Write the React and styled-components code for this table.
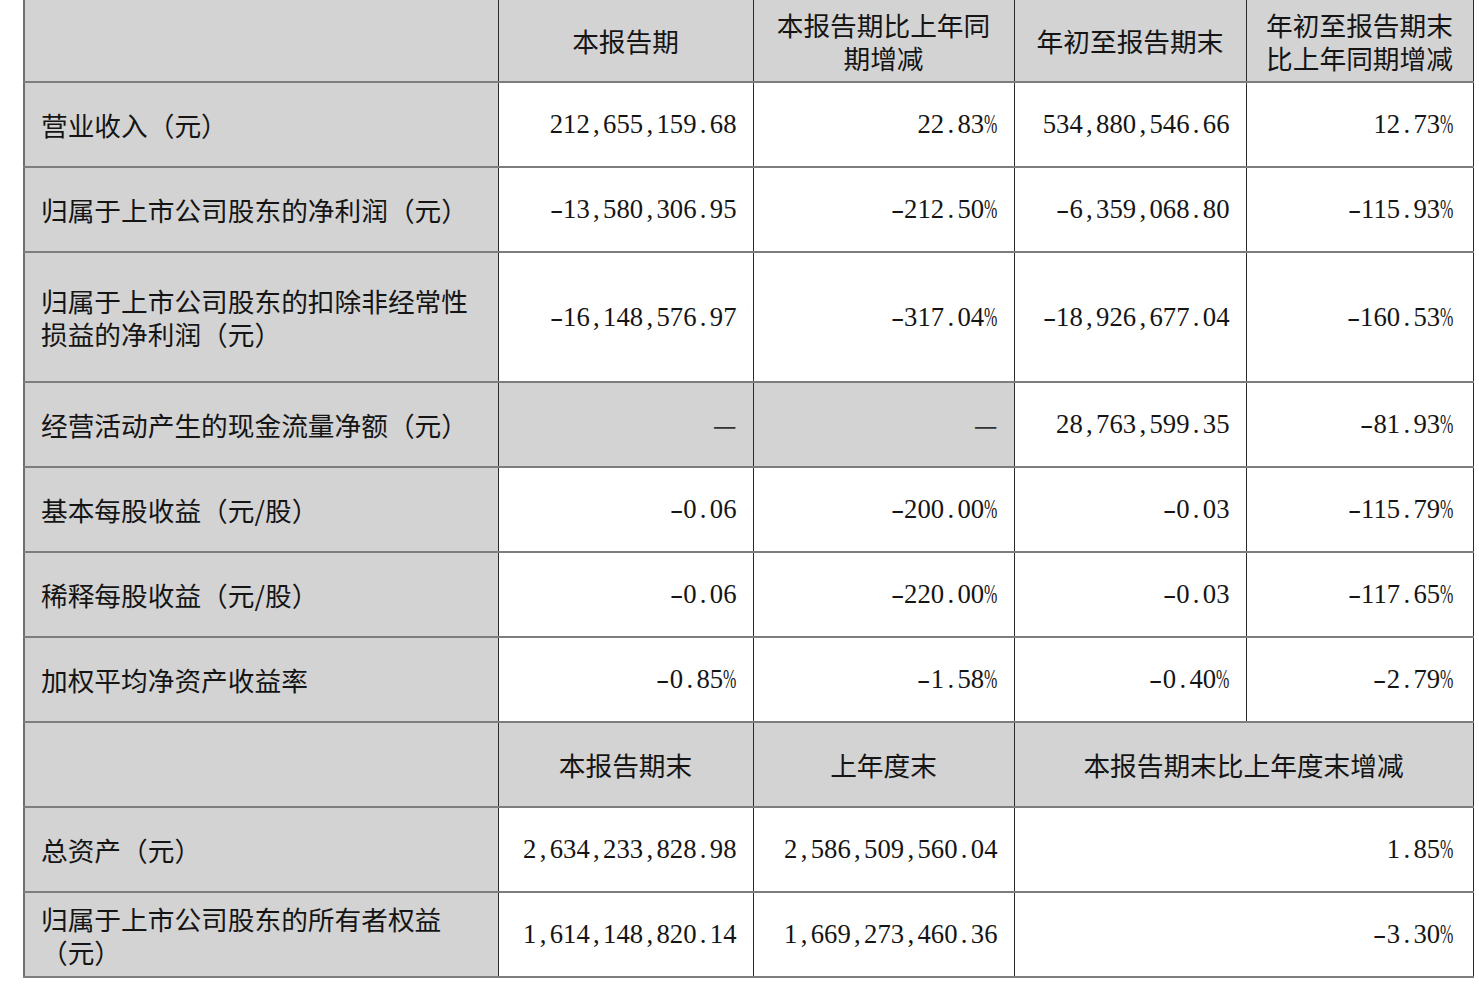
import React from "react";
import styled, { createGlobalStyle } from "styled-components";

const GlobalStyle = createGlobalStyle`
  html, body {
    margin: 0;
    padding: 0;
    background: #ffffff;
  }
`;

const Page = styled.div`
  padding: 0 0 0 23px;
  width: 1479px;
  height: 986px;
  box-sizing: border-box;
  overflow: hidden;
`;

const Table = styled.table`
  border-collapse: collapse;
  table-layout: fixed;
  width: 1449px;
  color: #151515;
  font-family: "Noto Sans CJK SC", "Noto Sans", sans-serif;
  font-size: 26.7px;
  border-left: 2px solid #6e6e6e;
  border-right: 1px solid #444;
  border-bottom: 2px solid #7a7a7a;
`;

const Row = styled.tr`
  height: ${(p) => p.$h || 85}px;
`;

const Cell = styled.td`
  box-sizing: border-box;
  background: ${(p) => (p.$shade ? "#d3d3d3" : "#ffffff")};
  border-top: 2px solid #7d7d7d;
  border-bottom: 2px solid #7d7d7d;
  border-left: 1px solid #2b2b2b;
  border-right: 1px solid #2b2b2b;
  padding: ${(p) => (p.$num ? "0 16px 0 8px" : "0 10px 0 16px")};
  text-align: ${(p) => (p.$head ? "center" : p.$num ? "right" : "left")};
  vertical-align: middle;
  line-height: 33px;
  white-space: nowrap;
  font-family: ${(p) =>
    p.$num
      ? '"Liberation Serif", "DejaVu Serif", serif'
      : '"Noto Sans CJK SC", "Noto Sans", sans-serif'};
  font-size: 26.7px;
  ${(p) => p.$head && "padding: 0 6px;"}
  ${(p) => p.$first && "border-top: none;"}
  ${(p) => p.$last && "padding-right: 19px;"}
`;

/* half-width slot, like the ASCII cells of a Song-style font */
const Slot = styled.span`
  display: inline-block;
  width: 0.5em;
  text-align: center;
`;

const Minus = styled.span`
  display: inline-block;
  width: 0.5em;
  text-align: center;
  transform: scaleX(1.5);
`;

const Pct = styled.span`
  display: inline-block;
  width: 0.5em;
  transform: scaleX(0.6);
  transform-origin: left center;
`;

const Dash = styled.span`
  font-family: "Noto Sans CJK SC", sans-serif;
  color: #333;
`;

function Num({ value }) {
  if (value === "—") return <Dash>—</Dash>;
  return value.split("").map((ch, i) => {
    if (ch === "," || ch === ".") return <Slot key={i}>{ch}</Slot>;
    if (ch === "-") return <Minus key={i}>-</Minus>;
    if (ch === "%") return <Pct key={i}>%</Pct>;
    return <React.Fragment key={i}>{ch}</React.Fragment>;
  });
}

const headTop = [
  ["本报告期"],
  ["本报告期比上年同", "期增减"],
  ["年初至报告期末"],
  ["年初至报告期末", "比上年同期增减"],
];

const rows = [
  { label: ["营业收入（元）"], vals: ["212,655,159.68", "22.83%", "534,880,546.66", "12.73%"] },
  { label: ["归属于上市公司股东的净利润（元）"], vals: ["-13,580,306.95", "-212.50%", "-6,359,068.80", "-115.93%"] },
  {
    label: ["归属于上市公司股东的扣除非经常性", "损益的净利润（元）"],
    vals: ["-16,148,576.97", "-317.04%", "-18,926,677.04", "-160.53%"],
    h: 130,
  },
  { label: ["经营活动产生的现金流量净额（元）"], vals: ["—", "—", "28,763,599.35", "-81.93%"], shaded: [true, true, false, false] },
  { label: ["基本每股收益（元/股）"], vals: ["-0.06", "-200.00%", "-0.03", "-115.79%"] },
  { label: ["稀释每股收益（元/股）"], vals: ["-0.06", "-220.00%", "-0.03", "-117.65%"] },
  { label: ["加权平均净资产收益率"], vals: ["-0.85%", "-1.58%", "-0.40%", "-2.79%"] },
];

const balance = [
  { label: ["总资产（元）"], vals: ["2,634,233,828.98", "2,586,509,560.04", "1.85%"] },
  { label: ["归属于上市公司股东的所有者权益", "（元）"], vals: ["1,614,148,820.14", "1,669,273,460.36", "-3.30%"] },
];

function Lines({ parts }) {
  return parts.map((t, i) => (
    <React.Fragment key={i}>
      {i > 0 && <br />}
      {t}
    </React.Fragment>
  ));
}

export default function App() {
  return (
    <Page>
      <GlobalStyle />
      <Table>
        <colgroup>
          <col style={{ width: 474 }} />
          <col style={{ width: 255 }} />
          <col style={{ width: 261 }} />
          <col style={{ width: 232 }} />
          <col style={{ width: 227 }} />
        </colgroup>
        <tbody>
          <Row $h={82}>
            <Cell $shade $first />
            {headTop.map((h, i) => (
              <Cell key={i} $shade $head $first>
                <Lines parts={h} />
              </Cell>
            ))}
          </Row>
          {rows.map((r, i) => (
            <Row key={i} $h={r.h}>
              <Cell $shade>
                <Lines parts={r.label} />
              </Cell>
              {r.vals.map((v, j) => (
                <Cell key={j} $num $last={j === 3} $shade={r.shaded && r.shaded[j]}>
                  <Num value={v} />
                </Cell>
              ))}
            </Row>
          ))}
          <Row>
            <Cell $shade />
            <Cell $shade $head>本报告期末</Cell>
            <Cell $shade $head>上年度末</Cell>
            <Cell $shade $head colSpan={2}>
              本报告期末比上年度末增减
            </Cell>
          </Row>
          {balance.map((r, i) => (
            <Row key={i}>
              <Cell $shade>
                <Lines parts={r.label} />
              </Cell>
              <Cell $num>
                <Num value={r.vals[0]} />
              </Cell>
              <Cell $num>
                <Num value={r.vals[1]} />
              </Cell>
              <Cell $num $last colSpan={2}>
                <Num value={r.vals[2]} />
              </Cell>
            </Row>
          ))}
        </tbody>
      </Table>
    </Page>
  );
}
